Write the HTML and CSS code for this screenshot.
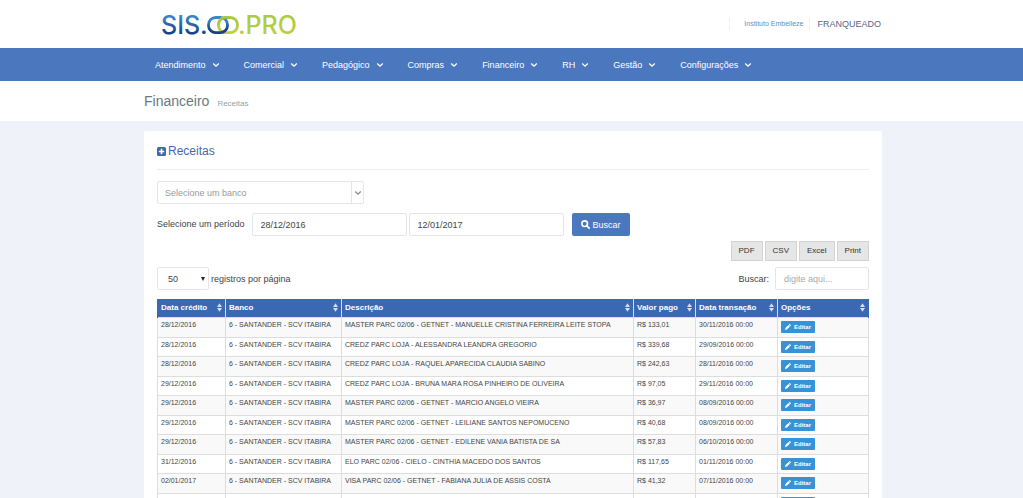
FILE: index.html
```html
<!DOCTYPE html>
<html lang="pt-BR">
<head>
<meta charset="utf-8">
<title>Receitas</title>
<link rel="stylesheet" href="styles.css">
</head>
<body>
<svg class="sprite" aria-hidden="true">
  <symbol id="chevron" viewBox="0 0 8 8"><path d="M1.2 2.6 4 5.2 6.8 2.6" fill="none" stroke="currentColor" stroke-width="1.3"/></symbol>
  <symbol id="sort" viewBox="0 0 6 10"><path d="M3 0 6 4.4H0zM3 10 0 5.6h6z" fill="currentColor"/></symbol>
  <symbol id="pencil" viewBox="0 0 8 8"><path d="M0 8 .6 5.4 4.6 1.4 6.6 3.4 2.6 7.4zM5.1.9l.6-.6a.8.8 0 0 1 1.1 0l.9.9a.8.8 0 0 1 0 1.1l-.6.6z" fill="currentColor"/></symbol>
</svg>

<header class="top">
  <div class="container top-row">
    <a class="logo" href="#" aria-label="SIS.OO.PRO">
      <svg width="144" height="36" viewBox="0 0 144 36">
        <defs>
          <linearGradient id="blue" x1="0" y1="0" x2="0" y2="1"><stop offset="0.2" stop-color="#3c87c6"/><stop offset="0.8" stop-color="#173f86"/></linearGradient>
          <linearGradient id="green" x1="0" y1="0" x2="0" y2="1"><stop offset="0" stop-color="#a9c940"/><stop offset="1" stop-color="#bccf45"/></linearGradient>
        </defs>
        <text class="logo-text" x="0" y="26" fill="url(#blue)">SIS.</text>
        <rect x="57.5" y="9.5" width="19" height="15.2" rx="7.2" fill="none" stroke="url(#green)" stroke-width="2.8"/>
        <rect x="47.5" y="9.5" width="19" height="15.2" rx="7.2" fill="none" stroke="url(#blue)" stroke-width="2.8"/>
        <path d="M64.5 9.5a7 7 0 0 0-7 7.2" fill="none" stroke="#a9c940" stroke-width="2.8"/>
        <text class="logo-text" x="77" y="26" fill="url(#green)">.PRO</text>
      </svg>
    </a>
    <div class="account">
      <a class="unit" href="#">Instituto Embelleze</a>
      <span class="role">FRANQUEADO</span>
    </div>
  </div>
</header>

<nav class="menu">
  <div class="container menu-row">
    <a href="#">Atendimento <svg class="chev"><use href="#chevron"/></svg></a>
    <a href="#">Comercial <svg class="chev"><use href="#chevron"/></svg></a>
    <a href="#">Pedagógico <svg class="chev"><use href="#chevron"/></svg></a>
    <a href="#">Compras <svg class="chev"><use href="#chevron"/></svg></a>
    <a href="#">Financeiro <svg class="chev"><use href="#chevron"/></svg></a>
    <a href="#">RH <svg class="chev"><use href="#chevron"/></svg></a>
    <a href="#">Gestão <svg class="chev"><use href="#chevron"/></svg></a>
    <a href="#">Configurações <svg class="chev"><use href="#chevron"/></svg></a>
  </div>
</nav>

<div class="heading">
  <div class="container heading-row">
    <h1>Financeiro</h1><small>Receitas</small>
  </div>
</div>

<main class="page">
  <section class="container card">
    <h2><svg width="9" height="9" viewBox="0 0 9 9"><rect width="9" height="9" rx="1.6" fill="currentColor"/><path d="M4.5 1.8v5.4M1.8 4.5h5.4" stroke="#fff" stroke-width="1.6"/></svg>Receitas</h2>

    <form class="filters">
      <div class="select bank">
        <select aria-label="Banco"><option>Selecione um banco</option></select>
        <span class="arrow"><svg class="chev"><use href="#chevron"/></svg></span>
      </div>
      <div class="period">
        <label for="from">Selecione um período</label>
        <input id="from" type="text" value="28/12/2016">
        <input aria-label="Até" type="text" value="12/01/2017">
        <button type="button" class="search"><svg width="9" height="9" viewBox="0 0 9 9"><circle cx="3.7" cy="3.7" r="2.8" fill="none" stroke="currentColor" stroke-width="1.6"/><path d="M5.8 5.8 8.2 8.2" stroke="currentColor" stroke-width="1.8" stroke-linecap="round"/></svg>Buscar</button>
      </div>
    </form>

    <div class="exports">
      <button type="button">PDF</button><button type="button">CSV</button><button type="button">Excel</button><button type="button">Print</button>
    </div>

    <div class="tools">
      <div class="length">
        <div class="select">
          <select id="length"><option>50</option></select>
          <svg class="caret" viewBox="0 0 4 4"><path d="M0 0h4L2 4z" fill="#222"/></svg>
        </div>
        <label for="length">registros por página</label>
      </div>
      <div class="find">
        <label for="find">Buscar:</label>
        <input id="find" type="text" placeholder="digite aqui...">
      </div>
    </div>

    <table>
      <colgroup><col class="c-date"><col class="c-bank"><col><col class="c-value"><col class="c-trans"><col class="c-opts"></colgroup>
      <thead>
        <tr>
          <th><div>Data crédito<svg><use href="#sort"/></svg></div></th>
          <th><div>Banco<svg><use href="#sort"/></svg></div></th>
          <th><div>Descrição<svg><use href="#sort"/></svg></div></th>
          <th><div>Valor pago<svg><use href="#sort"/></svg></div></th>
          <th><div>Data transação<svg><use href="#sort"/></svg></div></th>
          <th><div>Opções<svg><use href="#sort"/></svg></div></th>
        </tr>
      </thead>
      <tbody>
        <tr><td>28/12/2016</td><td>6 - SANTANDER - SCV ITABIRA</td><td>MASTER PARC 02/06 - GETNET - MANUELLE CRISTINA FERREIRA LEITE STOPA</td><td>R$ 133,01</td><td>30/11/2016 00:00</td><td><button type="button"><svg><use href="#pencil"/></svg>Editar</button></td></tr>
        <tr><td>28/12/2016</td><td>6 - SANTANDER - SCV ITABIRA</td><td>CREDZ PARC LOJA - ALESSANDRA LEANDRA GREGORIO</td><td>R$ 339,68</td><td>29/09/2016 00:00</td><td><button type="button"><svg><use href="#pencil"/></svg>Editar</button></td></tr>
        <tr><td>28/12/2016</td><td>6 - SANTANDER - SCV ITABIRA</td><td>CREDZ PARC LOJA - RAQUEL APARECIDA CLAUDIA SABINO</td><td>R$ 242,63</td><td>28/11/2016 00:00</td><td><button type="button"><svg><use href="#pencil"/></svg>Editar</button></td></tr>
        <tr><td>29/12/2016</td><td>6 - SANTANDER - SCV ITABIRA</td><td>CREDZ PARC LOJA - BRUNA MARA ROSA PINHEIRO DE OLIVEIRA</td><td>R$ 97,05</td><td>29/11/2016 00:00</td><td><button type="button"><svg><use href="#pencil"/></svg>Editar</button></td></tr>
        <tr><td>29/12/2016</td><td>6 - SANTANDER - SCV ITABIRA</td><td>MASTER PARC 02/06 - GETNET - MARCIO ANGELO VIEIRA</td><td>R$ 36,97</td><td>08/09/2016 00:00</td><td><button type="button"><svg><use href="#pencil"/></svg>Editar</button></td></tr>
        <tr><td>29/12/2016</td><td>6 - SANTANDER - SCV ITABIRA</td><td>MASTER PARC 02/06 - GETNET - LEILIANE SANTOS NEPOMUCENO</td><td>R$ 40,68</td><td>08/09/2016 00:00</td><td><button type="button"><svg><use href="#pencil"/></svg>Editar</button></td></tr>
        <tr><td>29/12/2016</td><td>6 - SANTANDER - SCV ITABIRA</td><td>MASTER PARC 02/06 - GETNET - EDILENE VANIA BATISTA DE SA</td><td>R$ 57,83</td><td>06/10/2016 00:00</td><td><button type="button"><svg><use href="#pencil"/></svg>Editar</button></td></tr>
        <tr><td>31/12/2016</td><td>6 - SANTANDER - SCV ITABIRA</td><td>ELO PARC 02/06 - CIELO - CINTHIA MACEDO DOS SANTOS</td><td>R$ 117,65</td><td>01/11/2016 00:00</td><td><button type="button"><svg><use href="#pencil"/></svg>Editar</button></td></tr>
        <tr><td>02/01/2017</td><td>6 - SANTANDER - SCV ITABIRA</td><td>VISA PARC 02/06 - GETNET - FABIANA JULIA DE ASSIS COSTA</td><td>R$ 41,32</td><td>07/11/2016 00:00</td><td><button type="button"><svg><use href="#pencil"/></svg>Editar</button></td></tr>
        <tr><td></td><td></td><td></td><td></td><td></td><td><button type="button" aria-label="Editar"></button></td></tr>
      </tbody>
    </table>
  </section>
</main>
</body>
</html>
```
FILE: styles.css
```css
* { box-sizing: border-box; }

body {
  margin: 0;
  background: #eff3f9;
  color: #444;
  font: 9px/12px "Liberation Sans", Arial, sans-serif;
}

input, select, button { font: inherit; color: inherit; margin: 0; }
a { text-decoration: none; }
.sprite { display: none; }
.container { max-width: 738px; margin: 0 auto; }
.top, .menu, .heading, .page { padding-left: 3px; }
.chev { width: 8px; height: 8px; flex: none; }

/* header */
.top { background: #fff; }
.top-row { display: flex; justify-content: space-between; align-items: center; height: 48px; }
.logo { margin-left: 17px; padding-top: 4px; }
.logo svg { display: block; }
.logo-text { font: 500 25px Inter, sans-serif; }
.account { display: flex; align-items: center; padding-right: 1px; color: #56648a; }
.unit { border: solid #edf0f4; border-width: 0 1px; padding: 0 6px 0 14px; font-size: 7px; color: #5b93c4; }
.role { padding-left: 7px; }

/* menu */
.menu { background: #4a77be; }
.menu-row { display: flex; flex-wrap: wrap; padding-left: 11px; gap: 24px; }
.menu a { display: flex; align-items: center; gap: 6px; min-height: 33px; color: #fff; }

/* heading */
.heading { background: #fff; }
.heading-row { display: flex; align-items: baseline; gap: 8px; padding: 10px 0; }
h1 { margin: 0; font-size: 14px; line-height: 20px; font-weight: 400; color: #697882; }
small { font-size: 8px; color: #93a1aa; }

/* card */
.page { padding-top: 10px; }
.card { background: #fff; padding: 13px; border-radius: 2px; }
h2 {
  display: flex; align-items: center; gap: 2px;
  margin: 0 0 11px; padding-bottom: 11px; border-bottom: 1px solid #eee;
  font-size: 12px; line-height: 14px; font-weight: 400; color: #3f68ae;
}

input, select {
  height: 23px; padding: 0 8px; background: #fff;
  border: 1px solid #e2e5ea; border-radius: 2px; outline: 0;
}
select { appearance: none; width: 100%; display: block; }
.select { position: relative; }
.bank { width: 207px; }
.bank select { padding-left: 7px; color: #999; }
.arrow {
  position: absolute; top: 0; right: 0; bottom: 0; width: 13px;
  display: flex; align-items: center; justify-content: center;
  border-left: 1px solid #e2e5ea; color: #888; pointer-events: none;
}
.period { display: flex; align-items: center; gap: 2px; margin-top: 9px; }
.period label { margin-right: 5px; padding-bottom: 2px; }
.period input { width: 155px; }
.search {
  display: flex; align-items: center; gap: 3px; height: 23px; margin-left: 6px; padding: 0 9px;
  background: #4a77be; color: #fff; border: 0; border-radius: 2px;
}

.exports { display: flex; justify-content: flex-end; gap: 2px; margin-top: 5px; }
.exports button {
  height: 20px; padding: 0 7px; background: #e6e6e6; border: 1px solid #d2d2d2; color: #333;
  font-size: 8px;
}

.tools { display: flex; justify-content: space-between; margin: 6px 0 9px; }
.length, .find { display: flex; align-items: center; }
.length { gap: 2px; }
.length .select { width: 52px; }
.length select { padding-left: 10px; }
.caret { position: absolute; right: 4px; top: 10px; width: 4px; height: 4px; pointer-events: none; }
.find { gap: 6px; }
.find input { width: 94px; }
::placeholder { color: #aaa; opacity: 1; }

/* table */
table { width: 100%; table-layout: fixed; border-collapse: collapse; font-size: 7px; line-height: 8px; }
.c-date { width: 68px; }
.c-bank { width: 116px; }
.c-value { width: 62px; }
.c-trans { width: 82px; }
.c-opts { width: 91px; }
th {
  height: 18px; padding: 0 3px; background: #3a68b3; color: #fff;
  border: 1px solid #d9dee6; border-width: 0 1px; font-size: 8px; text-align: left;
}
th:first-child { border-left-color: #3a68b3; }
th:last-child { border-right-color: #3a68b3; }
th div { display: flex; align-items: center; justify-content: space-between; }
th svg { width: 5px; height: 9px; flex: none; color: #d3def2; }
td { height: 20px; padding: 3px 3px 0; border: 1px solid #ddd; vertical-align: top; white-space: nowrap; }
tr:nth-child(even) td { height: 19px; }
tr:nth-child(odd) td { background: #f9f9f9; }
td button {
  display: flex; align-items: center; justify-content: center; gap: 3px;
  width: 34px; height: 12px; padding: 0; background: #3793d5; color: #fff;
  border: 0; border-radius: 1px; font-size: 6px; font-weight: 700; line-height: 8px;
}
td button svg { width: 6px; height: 6px; }
```
